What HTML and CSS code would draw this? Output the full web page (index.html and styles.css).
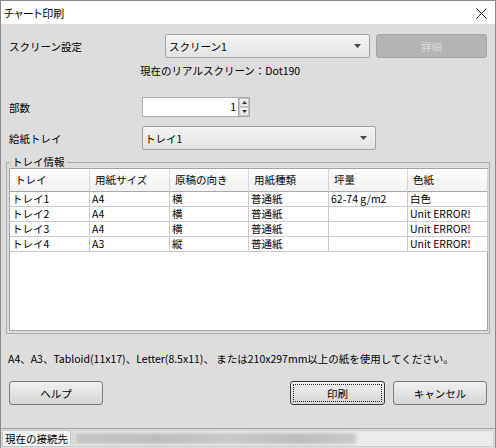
FILE: index.html
```html
<!DOCTYPE html>
<html lang="ja">
<head>
<meta charset="utf-8">
<title>チャート印刷</title>
<link rel="stylesheet" href="styles.css">
</head>
<body>
<div class="window">
  <div class="titlebar">
    <span class="title">チャート印刷</span>
    <svg class="close" width="11" height="11" viewBox="0 0 11 11"><path d="M0.5 0.5 L10.5 10.5 M10.5 0.5 L0.5 10.5" stroke="#222" stroke-width="1" fill="none"/></svg>
  </div>
  <div class="content">
    <div class="row row-screen">
      <span class="lbl lbl-wide">スクリーン設定</span>
      <div class="combo combo-screen"><span>スクリーン1</span><svg class="arrow" width="7" height="4" viewBox="0 0 7 4"><path d="M0 0 H7 L3.5 4 Z" fill="#444"/></svg></div>
      <div class="btn btn-disabled">詳細</div>
    </div>
    <div class="row row-info">現在のリアルスクリーン：Dot190</div>
    <div class="row row-copies">
      <span class="lbl">部数</span>
      <div class="spin">
        <div class="spin-input">1</div>
        <div class="spin-btns">
          <div class="spin-btn"><svg width="5" height="3" viewBox="0 0 5 3"><path d="M0 3 H5 L2.5 0 Z" fill="#333"/></svg></div>
          <div class="spin-btn"><svg width="5" height="3" viewBox="0 0 5 3"><path d="M0 0 H5 L2.5 3 Z" fill="#333"/></svg></div>
        </div>
      </div>
    </div>
    <div class="row row-tray">
      <span class="lbl">給紙トレイ</span>
      <div class="combo combo-tray"><span>トレイ1</span><svg class="arrow" width="7" height="4" viewBox="0 0 7 4"><path d="M0 0 H7 L3.5 4 Z" fill="#444"/></svg></div>
    </div>
    <fieldset class="group">
      <legend>トレイ情報</legend>
      <div class="table">
        <div class="trow thead">
          <div class="cell">トレイ</div>
          <div class="cell">用紙サイズ</div>
          <div class="cell">原稿の向き</div>
          <div class="cell">用紙種類</div>
          <div class="cell">坪量</div>
          <div class="cell">色紙</div>
        </div>
        <div class="trow">
          <div class="cell">トレイ1</div><div class="cell">A4</div><div class="cell">横</div><div class="cell">普通紙</div><div class="cell">62-74 g/m2</div><div class="cell">白色</div>
        </div>
        <div class="trow">
          <div class="cell">トレイ2</div><div class="cell">A4</div><div class="cell">横</div><div class="cell">普通紙</div><div class="cell"></div><div class="cell">Unit ERROR!</div>
        </div>
        <div class="trow">
          <div class="cell">トレイ3</div><div class="cell">A4</div><div class="cell">横</div><div class="cell">普通紙</div><div class="cell"></div><div class="cell">Unit ERROR!</div>
        </div>
        <div class="trow">
          <div class="cell">トレイ4</div><div class="cell">A3</div><div class="cell">縦</div><div class="cell">普通紙</div><div class="cell"></div><div class="cell">Unit ERROR!</div>
        </div>
      </div>
    </fieldset>
    <p class="note">A4、A3、Tabloid(11x17)、Letter(8.5x11)、 または210x297mm以上の紙を使用してください。</p>
    <div class="buttons">
      <div class="btn btn-help">ヘルプ</div>
      <div class="spacer"></div>
      <div class="btn btn-default"><span class="focus">印刷</span></div>
      <div class="btn btn-cancel">キャンセル</div>
    </div>
  </div>
  <div class="statusbar">
    <div class="status-label">現在の接続先</div>
    <div class="status-field"><div class="blurred"></div></div>
  </div>
</div>
</body>
</html>
```

FILE: styles.css
```css
* { box-sizing: border-box; }
html, body { margin: 0; padding: 0; background: #ffffff; }
.window {
  width: 496px;
  height: 448px;
  border: 1px solid #8a8a8a;
  border-bottom: 0;
  background: #dddddd;
  display: flex;
  flex-direction: column;
  overflow: hidden;
  font-family: "Noto Sans CJK JP", "Noto Sans", sans-serif;
  font-size: 10.5px;
  color: #000;
}
.titlebar {
  height: 23px;
  flex: none;
  background: #ffffff;
  display: flex;
  align-items: center;
  justify-content: space-between;
  padding: 0 8px 0 3px;
}
.title {
  font-size: 11px;
  font-feature-settings: "palt";
  color: #000;
}
.close { display: block; margin-top: 2px; }
.content {
  flex: 1;
  display: flex;
  flex-direction: column;
  padding: 10px 8px 0;
}
.row { display: flex; align-items: center; flex: none; }
.lbl { width: 133px; flex: none; }
.lbl-wide { width: 156px; }
.row-screen { height: 24px; }
.row-info { margin-top: 5px; height: 16px; line-height: 16px; padding-left: 131px; }
.row-copies { margin-top: 18px; height: 20px; }
.row-tray { margin-top: 9px; height: 24px; }

.combo {
  height: 24px;
  border: 1px solid #a3a3a3;
  border-radius: 2px;
  background: linear-gradient(#f3f3f3, #e3e3e3);
  display: flex;
  align-items: center;
  justify-content: space-between;
  padding: 0 8px 0 3px;
}
.combo-screen { width: 205px; padding-left: 3px; padding-right: 8px; }
.combo-tray { width: 234px; height: 24px; padding-left: 2px; padding-right: 8px; }
.arrow { display: block; }

.btn {
  height: 24px;
  border: 1px solid #7a7a7a;
  border-radius: 3px;
  background: linear-gradient(#f0f0f0, #d6d6d6);
  display: flex;
  align-items: center;
  justify-content: center;
}
.btn-disabled {
  margin-left: 6px;
  flex: 1;
  background: #b4b4b4;
  border-color: #a6a6a6;
  color: #d9d9d9;
}
.spin { display: flex; height: 20px; width: 108px; }
.spin-input {
  width: 96px;
  height: 20px;
  background: #fff;
  border: 1px solid #b0b0b0;
  border-right: 0;
  text-align: right;
  padding-right: 2px;
  line-height: 18px;
}
.spin-btns {
  width: 12px;
  display: flex;
  flex-direction: column;
  border: 1px solid #a8a8a8;
  background: #fff;
}
.spin-btn {
  flex: 1;
  display: flex;
  align-items: center;
  justify-content: center;
  background: linear-gradient(#f4f4f4, #e4e4e4);
  border: 1px solid #c4c4c4;
}
.spin-btn svg { display: block; }

.group {
  margin: 6px -3px 0;
  padding: 0 1px 2px 2px;
  border: 1px solid #ababab;
  flex: none;
  min-width: 0;
}
.group legend {
  padding: 0 2px;
  margin-left: 1px;
  line-height: 12px;
  font-size: 10.5px;
}
.table {
  height: 163px;
  background: #fff;
  border: 1px solid #a2a2a2;
}
.trow {
  display: grid;
  grid-template-columns: 80px 80px 79px 80px 79px 80px;
}
.cell {
  height: 15px;
  line-height: 14px;
  padding-left: 2px;
  border-right: 1px solid #cacaca;
  border-bottom: 1px solid #cacaca;
  white-space: nowrap;
  overflow: hidden;
}
.thead .cell {
  height: 23px;
  line-height: 22px;
  padding-left: 5px;
  background: linear-gradient(#ffffff, #f1f1f1);
  border-right: 1px solid #d6d6d6;
  border-bottom: 1px solid #a9a9a9;
}
.note {
  margin: 17px 0 0 -1px;
  height: 16px;
  line-height: 16px;
  white-space: nowrap;
  flex: none;
}
.buttons {
  margin-top: 14px;
  display: flex;
  height: 24px;
  flex: none;
}
.btn-help { width: 94px; }
.spacer { flex: 1; }
.btn-default {
  width: 95px;
  border-color: #3a3a3a;
  padding: 2px;
  align-items: stretch;
}
.focus {
  flex: 1;
  border: 1px dotted #202020;
  display: flex;
  align-items: center;
  justify-content: center;
}
.btn-cancel { width: 94px; margin-left: 8px; }

.statusbar {
  margin-top: auto;
  height: 20px;
  flex: none;
  border-top: 1px solid #a3a3a3;
  display: flex;
  padding: 1px 1px 0 1px;
  gap: 2px;
}
.status-label {
  width: 69px;
  height: 17px;
  background: #f4f4f4;
  border: 1px solid #c6c6c6;
  line-height: 15px;
  padding-left: 2px;
  white-space: nowrap;
}
.status-field {
  flex: 1;
  height: 17px;
  background: #ebebeb;
  border: 1px solid #d0d0d0;
  padding: 2px 0 0 1px;
}
.blurred {
  width: 281px;
  height: 11px;
  background: linear-gradient(90deg, #c6c6c6, #bdbdbd 30%, #c9c9c9 55%, #bcbcbc 80%, #cacaca);
  filter: blur(1.5px);
}
```
